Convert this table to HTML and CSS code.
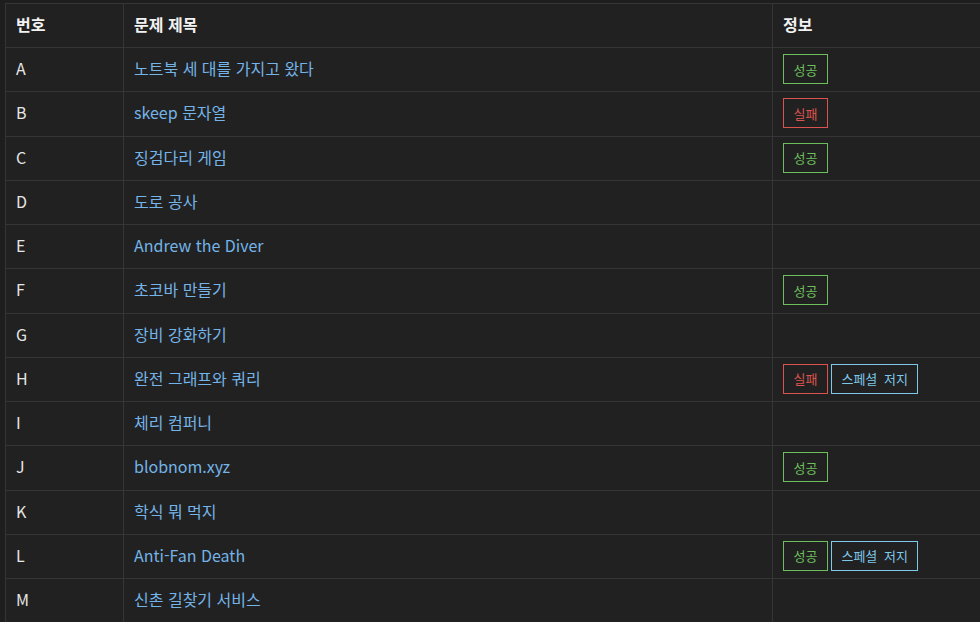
FILE: index.html
```html
<!DOCTYPE html>
<html lang="ko">
<head>
<meta charset="utf-8">
<link rel="stylesheet" href="styles.css">
</head>
<body>
<div class="wrap">
<table class="problems">
  <colgroup>
    <col class="c-num"><col class="c-title"><col class="c-info">
  </colgroup>
  <thead>
    <tr><th>번호</th><th>문제 제목</th><th>정보</th></tr>
  </thead>
  <tbody>
    <tr><td>A</td><td><a href="#">노트북 세 대를 가지고 왔다</a></td><td><div class="tags"><span class="tag ok">성공</span></div></td></tr>
    <tr><td>B</td><td><a href="#">skeep 문자열</a></td><td><div class="tags"><span class="tag fail">실패</span></div></td></tr>
    <tr><td>C</td><td><a href="#">징검다리 게임</a></td><td><div class="tags"><span class="tag ok">성공</span></div></td></tr>
    <tr><td>D</td><td><a href="#">도로 공사</a></td><td></td></tr>
    <tr><td>E</td><td><a href="#">Andrew the Diver</a></td><td></td></tr>
    <tr><td>F</td><td><a href="#">초코바 만들기</a></td><td><div class="tags"><span class="tag ok">성공</span></div></td></tr>
    <tr><td>G</td><td><a href="#">장비 강화하기</a></td><td></td></tr>
    <tr><td>H</td><td><a href="#">완전 그래프와 쿼리</a></td><td><div class="tags"><span class="tag fail">실패</span><span class="tag special">스페셜 저지</span></div></td></tr>
    <tr><td>I</td><td><a href="#">체리 컴퍼니</a></td><td></td></tr>
    <tr><td>J</td><td><a href="#">blobnom.xyz</a></td><td><div class="tags"><span class="tag ok">성공</span></div></td></tr>
    <tr><td>K</td><td><a href="#">학식 뭐 먹지</a></td><td></td></tr>
    <tr><td>L</td><td><a href="#">Anti-Fan Death</a></td><td><div class="tags"><span class="tag ok">성공</span><span class="tag special">스페셜 저지</span></div></td></tr>
    <tr><td>M</td><td><a href="#">신촌 길찾기 서비스</a></td><td></td></tr>
  </tbody>
</table>
</div>
</body>
</html>
```
FILE: styles.css
```css
html, body {
  margin: 0;
  background: #1e1e1e;
  overflow: hidden;
}
.wrap {
  padding: 3px 0 0 5px;
  width: 1200px;
}
.problems {
  border-collapse: collapse;
  width: 1100px;
  table-layout: fixed;
  font-family: "Noto Sans CJK KR", "Noto Sans", sans-serif;
  font-size: 16px;
  color: #e6e6e6;
  background: #212121;
}
.c-num { width: 118px; }
.c-title { width: 649px; }
.c-info { width: 333px; }
.problems th,
.problems td {
  border: 1px solid #353535;
  padding: 0 10px 3px 10px;
  height: 40.25px;
  text-align: left;
  vertical-align: middle;
}
.problems th {
  font-weight: 700;
  color: #f2f2f2;
  font-size: 16px;
  height: 40px;
}
.problems a {
  color: #74b4e8;
  text-decoration: none;
}
.tags {
  display: flex;
  gap: 3px;
  margin-top: 2px;
}
.tag {
  display: inline-flex;
  align-items: center;
  box-sizing: border-box;
  height: 30px;
  padding: 0 9.5px;
  font-size: 13px;
  border: 1px solid;
  background: transparent;
}
.tag.ok { color: #6cbf5c; border-color: #6cbf5c; }
.tag.fail { color: #d9534f; border-color: #d9534f; }
.tag.special { color: #7ec8ea; border-color: #7ec8ea; word-spacing: 3px; }
```
